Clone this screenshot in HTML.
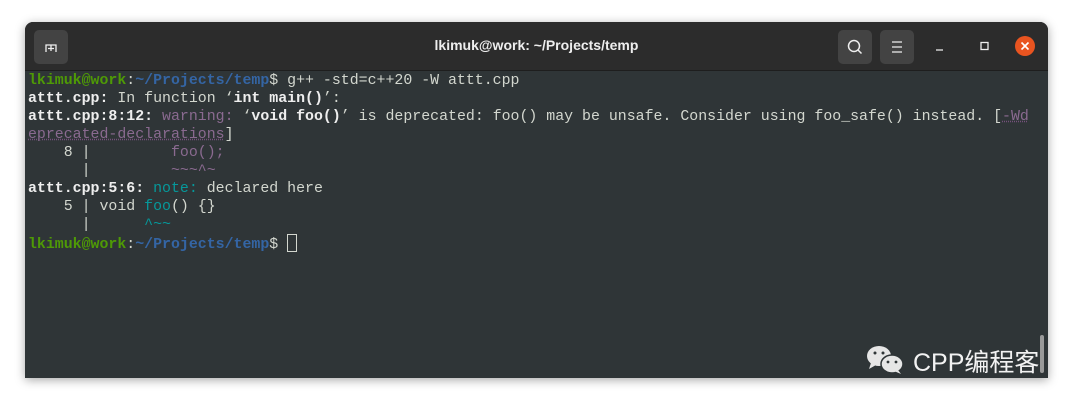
<!DOCTYPE html>
<html><head><meta charset="utf-8"><style>
body{margin:0;width:1074px;height:407px;background:#fff;position:relative;overflow:hidden}
.win{position:absolute;left:25px;top:22px;width:1023px;height:356px;background:#2f3537;border-radius:8px 8px 0 0;overflow:hidden;box-shadow:0 2px 10px rgba(0,0,0,.35)}
.tb{position:absolute;left:0;top:0;right:0;height:48px;background:#2c2c2c;border-bottom:1px solid #1e1e1e}
.btn{position:absolute;top:8px;width:34px;height:34px;background:#434343;border-radius:5px}
.title{position:absolute;left:0;right:0;top:15px;text-align:center;color:#eee;font:bold 14px "Liberation Sans",sans-serif}
.term{position:absolute;left:3px;top:50px;font:14.9px/18px "Liberation Mono",monospace;color:#d3d7cf;white-space:pre}
.g{color:#4e9a06;font-weight:bold}.bl{color:#3465a4;font-weight:bold}.b{font-weight:bold;color:#eee}
.m{color:#8a6a90}.mm{color:#75507b}.c{color:#06989a}.cc{color:#06989a}
.u{text-decoration:underline dotted #75507b}
.cur{display:inline-block;width:10px;height:18px;border:1px solid #d3d7cf;vertical-align:-4px;box-sizing:border-box}
</style></head><body>
<div class="win">
<div class="tb">
<div class="btn" style="left:9px"><svg width="34" height="34"><path d="M12 22V15H22V22M17 15.5V21M14 18.5H20" stroke="#eee" stroke-width="1.3" fill="none"/></svg></div>
<div class="title">lkimuk@work: ~/Projects/temp</div>
<div class="btn" style="left:813px"><svg width="34" height="34"><circle cx="16" cy="16" r="5.5" stroke="#eee" stroke-width="1.5" fill="none"/><path d="M20 20l3.5 3.5" stroke="#eee" stroke-width="1.5"/></svg></div>
<div class="btn" style="left:855px"><svg width="34" height="34"><path d="M12 12h10M12 17h10M12 22h10" stroke="#eee" stroke-width="1.2"/></svg></div>
<svg style="position:absolute;left:905px;top:15px" width="20" height="20"><path d="M6 13h7" stroke="#eee" stroke-width="1.3"/></svg>
<svg style="position:absolute;left:950px;top:15px" width="20" height="20"><rect x="6" y="5.5" width="7" height="7" stroke="#eee" stroke-width="1.3" fill="none"/></svg>
<svg style="position:absolute;left:990px;top:14px" width="20" height="20"><circle cx="10" cy="10" r="10" fill="#e95420"/><path d="M6.5 6.5l7 7M13.5 6.5l-7 7" stroke="#fff" stroke-width="1.6"/></svg>
</div>
<div class="term"><span class="g">lkimuk@work</span>:<span class="bl">~/Projects/temp</span>$ g++ -std=c++20 -W attt.cpp
<span class="b">attt.cpp:</span> In function ‘<span class="b">int main()</span>’:
<span class="b">attt.cpp:8:12:</span> <span class="m">warning: </span>‘<span class="b">void foo()</span>’ is deprecated: foo() may be unsafe. Consider using foo_safe() instead. [<span class="m u">-Wd</span>
<span class="m u">eprecated-declarations</span>]
    8 |         <span class="m">foo();</span>
      |         <span class="m">~~~^~</span>
<span class="b">attt.cpp:5:6:</span> <span class="c">note: </span>declared here
    5 | void <span class="cc">foo</span>() {}
      |      <span class="c">^~~</span>
<span class="g">lkimuk@work</span>:<span class="bl">~/Projects/temp</span>$ <span class="cur"></span></div>
<div style="position:absolute;right:4px;top:313px;width:4px;height:38px;background:#999;border-radius:2px"></div>
<svg style="position:absolute;left:840px;top:322px" width="42" height="32"><ellipse cx="14" cy="12" rx="12" ry="10" fill="#e6e6e6"/><path d="M6 19l-2 6 7-4z" fill="#e6e6e6"/><ellipse cx="27" cy="20" rx="11" ry="9" fill="#e6e6e6" stroke="#2f3537" stroke-width="1.5"/><path d="M33 26l3 4-7-3z" fill="#e6e6e6"/><circle cx="10" cy="9" r="1.5" fill="#2f3537"/><circle cx="18" cy="9" r="1.5" fill="#2f3537"/><circle cx="23" cy="18" r="1.4" fill="#2f3537"/><circle cx="31" cy="18" r="1.4" fill="#2f3537"/></svg>
<div style="position:absolute;left:888px;top:321px;color:#f2f2f2;font:25px 'Liberation Sans','Noto Sans CJK SC',sans-serif">CPP编程客</div>
</div>
</body></html>
